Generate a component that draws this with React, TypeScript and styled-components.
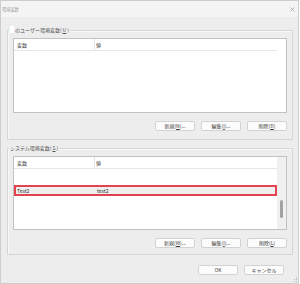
import React from "react";
import styled, { createGlobalStyle } from "styled-components";

const Global = createGlobalStyle`
  html, body { margin: 0; padding: 0; background: #ffffff; }
  body { font-family: "Noto Sans CJK JP", "Liberation Sans", sans-serif; }
  * { box-sizing: border-box; }
`;

const Window = styled.div`
  position: relative;
  width: 299px;
  height: 284px;
  border: 1px solid #cdcdcd;
  background: #ededed;
  display: flex;
  flex-direction: column;
  font-family: "Noto Sans CJK JP", "Liberation Sans", sans-serif;
`;

const TitleBar = styled.div`
  height: 16px;
  flex: none;
  background: #f4f4f4;
  display: flex;
  align-items: center;
  justify-content: space-between;
  padding: 0 3px 0 1px;
`;

const Title = styled.span`
  font-size: 4.2px;
  line-height: 6px;
  color: #9c9c9c;
`;

const CloseIcon = () => (
  <svg width="5" height="5" viewBox="0 0 5 5">
    <path d="M0.5 0.5 L4.5 4.5 M4.5 0.5 L0.5 4.5" stroke="#9a9a9a" strokeWidth="0.7" />
  </svg>
);

const Body = styled.div`
  flex: 1;
  display: flex;
  flex-direction: column;
  padding: 13px 5px 0 6px;
`;

const GroupBox = styled.div<{ $gapTop?: number }>`
  position: relative;
  margin-top: ${(p) => p.$gapTop ?? 0}px;
  border: 1px solid #d6d6d6;
  box-shadow: inset 1px 1px 0 #f8f8f8;
  padding: 7px 5px ${(p) => (p.$gapTop ? 6 : 8)}px 5px;
  display: flex;
  flex-direction: column;
  gap: 8px;
`;

const Legend = styled.div`
  position: absolute;
  top: -5px;
  left: 1px;
  height: 7px;
  padding: 0 1px;
  background: #ededed;
  display: flex;
  align-items: center;
  gap: 1px;
  font-size: 5px;
  line-height: 7px;
  color: #505050;
  white-space: nowrap;
`;

const Redacted = styled.span`
  display: inline-block;
  width: 4px;
  height: 7px;
  background: #ffffff;
`;

const List = styled.div<{ $h: number }>`
  height: ${(p) => p.$h}px;
  background: #ffffff;
  border: 1px solid #c2c2c2;
  display: flex;
`;

const ListMain = styled.div`
  flex: 1;
  display: flex;
  flex-direction: column;
`;

const Header = styled.div`
  height: 12px;
  flex: none;
  display: grid;
  grid-template-columns: 81px 1fr;
  border-bottom: 1px solid #e6e6e6;
  font-size: 5px;
  line-height: 11px;
  color: #383838;
`;

const HeaderCell = styled.div<{ $divider?: boolean }>`
  padding-left: ${(p) => (p.$divider ? 3 : 1)}px;
  border-right: ${(p) => (p.$divider ? "1px solid #e4e4e4" : "none")};
`;

const Rows = styled.div<{ $top: number }>`
  padding-top: ${(p) => p.$top}px;
  display: flex;
  flex-direction: column;
`;

const Row = styled.div<{ $selected?: boolean }>`
  height: 11px;
  display: grid;
  grid-template-columns: 81px 1fr;
  font-size: 5px;
  line-height: 11px;
  color: #303030;
  background: ${(p) => (p.$selected ? "#efefef" : "transparent")};
  outline: ${(p) => (p.$selected ? "2px solid #e3434f" : "none")};
  outline-offset: -2px;
`;

const Cell = styled.div<{ $first?: boolean }>`
  padding-left: ${(p) => (p.$first ? 3 : 2)}px;
`;

const Scroll = styled.div<{ $visible?: boolean }>`
  width: 9px;
  flex: none;
  background: ${(p) => (p.$visible ? "#f0f0f0" : "#ffffff")};
  display: flex;
  flex-direction: column;
  justify-content: flex-end;
  align-items: center;
  padding-bottom: 11px;
`;

const Thumb = styled.div`
  width: 2.5px;
  height: 18px;
  border-radius: 2px;
  background: #a3a3a3;
`;

const ButtonRow = styled.div<{ $padRight?: number; $top?: number }>`
  display: flex;
  justify-content: flex-end;
  gap: 6px;
  padding-right: ${(p) => p.$padRight ?? 0}px;
  margin-top: ${(p) => p.$top ?? 0}px;
`;

const Button = styled.button`
  width: 40px;
  height: 10px;
  padding: 0;
  margin: 0;
  border: 1px solid #d2d2d2;
  border-radius: 2px;
  background: #fcfcfc;
  font-family: "Noto Sans CJK JP", "Liberation Sans", sans-serif;
  font-size: 5px;
  line-height: 8px;
  color: #3a3a3a;
  display: flex;
  align-items: center;
  justify-content: center;
`;

const Grip = styled.svg`
  position: absolute;
  right: 1px;
  bottom: 1px;
`;

export default function App() {
  return (
    <>
      <Global />
      <Window>
        <TitleBar>
          <Title>環境変数</Title>
          <CloseIcon />
        </TitleBar>
        <Body>
          <GroupBox>
            <Legend>
              <Redacted />
              のユーザー環境変数(<u>U</u>)
            </Legend>
            <List $h={75}>
              <ListMain>
                <Header>
                  <HeaderCell $divider>変数</HeaderCell>
                  <HeaderCell>値</HeaderCell>
                </Header>
              </ListMain>
              <Scroll />
            </List>
            <ButtonRow>
              <Button>新規(<u>N</u>)...</Button>
              <Button>編集(<u>I</u>)...</Button>
              <Button>削除(<u>D</u>)</Button>
            </ButtonRow>
          </GroupBox>
          <GroupBox $gapTop={8}>
            <Legend>システム環境変数(<u>S</u>)</Legend>
            <List $h={74}>
              <ListMain>
                <Header>
                  <HeaderCell $divider>変数</HeaderCell>
                  <HeaderCell>値</HeaderCell>
                </Header>
                <Rows $top={16}>
                  <Row $selected>
                    <Cell $first>Test2</Cell>
                    <Cell>test2</Cell>
                  </Row>
                </Rows>
              </ListMain>
              <Scroll $visible>
                <Thumb />
              </Scroll>
            </List>
            <ButtonRow>
              <Button>新規(<u>W</u>)...</Button>
              <Button>編集(<u>I</u>)...</Button>
              <Button>削除(<u>L</u>)</Button>
            </ButtonRow>
          </GroupBox>
          <ButtonRow $padRight={9} $top={10}>
            <Button>OK</Button>
            <Button>キャンセル</Button>
          </ButtonRow>
        </Body>
        <Grip width="4" height="5" viewBox="0 0 4 5">
          <rect x="3" y="0" width="1" height="1" fill="#b5b5b5" />
          <rect x="3" y="2" width="1" height="1" fill="#b5b5b5" />
          <rect x="1" y="2" width="1" height="1" fill="#b5b5b5" />
          <rect x="3" y="4" width="1" height="1" fill="#b5b5b5" />
          <rect x="1" y="4" width="1" height="1" fill="#b5b5b5" />
        </Grip>
      </Window>
    </>
  );
}
